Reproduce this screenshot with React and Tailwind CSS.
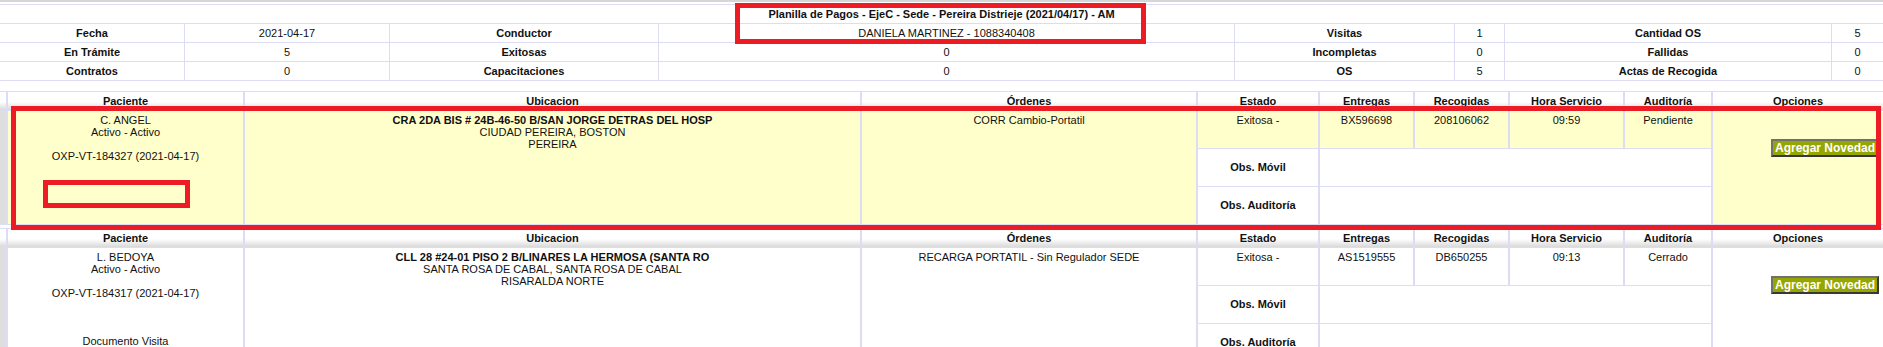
import React from "react";

const FONT = "font-['Liberation_Sans',Arial,sans-serif]";

function InfoTable() {
  const rows = [
    ["Fecha", "2021-04-17", "Conductor", "DANIELA MARTINEZ - 1088340408", "Visitas", "1", "Cantidad OS", "5"],
    ["En Trámite", "5", "Exitosas", "0", "Incompletas", "0", "Fallidas", "0"],
    ["Contratos", "0", "Capacitaciones", "0", "OS", "5", "Actas de Recogida", "0"],
  ];
  return (
    <div className="grid grid-cols-[184px_204px_268px_575px_219px_49px_326px_51px] gap-px bg-[#dcdcf5] py-px">
      <div className="col-span-8 flex h-[18px] items-center justify-center bg-white font-bold">
        Planilla de Pagos - EjeC - Sede - Pereira Distrieje (2021/04/17) - AM
      </div>
      {rows.map((r, i) =>
        r.map((c, j) => (
          <div
            key={`${i}-${j}`}
            className={`flex h-[18px] items-center justify-center bg-white ${j % 2 === 0 ? "font-bold" : ""}`}
          >
            {c}
          </div>
        ))
      )}
    </div>
  );
}

const HEAD = "bg-[linear-gradient(to_bottom,#ffffff_0%,#ffffff_55%,#d9d9d9_100%)]";

function Record({ yellow, name, code, addr, city, region, orden, entrega, recogida, hora, auditoria, doc }) {
  const bg = yellow ? "bg-[#ffffcc]" : "bg-white";
  const heads = ["Paciente", "Ubicacion", "Órdenes", "Estado", "Entregas", "Recogidas", "Hora Servicio", "Auditoría", "Opciones"];
  return (
    <div className="grid grid-cols-[6px_235px_615px_334px_120px_93px_93px_113px_86px_170px] grid-rows-[18px_37px_37px_37px] gap-x-[2px] gap-y-px bg-[#dcdcf5] py-px">
      <div className={HEAD} />
      {heads.map((h) => (
        <div key={h} className={`${HEAD} flex items-center justify-center font-bold`}>
          {h}
        </div>
      ))}
      <div className="row-span-3 bg-[#dedede]" />
      <div className={`row-span-3 ${bg} pt-[3px] text-center leading-[12px]`}>
        <div>{name}</div>
        <div>Activo - Activo</div>
        <div className="h-[12px]" />
        <div>{code}</div>
        {doc ? (
          <>
            <div className="h-[36px]" />
            <div>Documento Visita</div>
          </>
        ) : null}
      </div>
      <div className={`row-span-3 ${bg} pt-[3px] text-center leading-[12px]`}>
        <div className="font-bold">{addr}</div>
        <div>{city}</div>
        <div>{region}</div>
      </div>
      <div className={`row-span-3 ${bg} pt-[3px] text-center leading-[12px]`}>{orden}</div>
      <div className={`${bg} pt-[3px] text-center leading-[12px]`}>Exitosa -</div>
      <div className={`${bg} pt-[3px] text-center leading-[12px]`}>{entrega}</div>
      <div className={`${bg} pt-[3px] text-center leading-[12px]`}>{recogida}</div>
      <div className={`${bg} pt-[3px] text-center leading-[12px]`}>{hora}</div>
      <div className={`${bg} pt-[3px] text-center leading-[12px]`}>{auditoria}</div>
      <div className={`row-span-3 ${bg} flex items-start justify-end pr-[4px] pt-[28px]`}>
        <button className="h-[18px] border-2 border-b-[#383838] border-l-[#707070] border-r-[#383838] border-t-[#707070] bg-[#96a600] px-[2px] text-[12px] font-bold leading-[14px] text-white">
          Agregar Novedad
        </button>
      </div>
      <div className="flex items-center justify-center bg-white font-bold">Obs. Móvil</div>
      <div className="col-span-4 bg-white" />
      <div className="flex items-center justify-center bg-white font-bold">Obs. Auditoría</div>
      <div className="col-span-4 bg-white" />
    </div>
  );
}

export default function App() {
  return (
    <div className={`relative h-[347px] w-[1883px] overflow-hidden bg-white ${FONT} text-[11px] text-[#111]`}>
      <div className="h-[2px] bg-[#d6d6d6]" />
      <div className="mt-[2px]">
        <InfoTable />
      </div>
      <div className="mt-[10px]">
        <Record
          yellow
          name="C. ANGEL"
          code="OXP-VT-184327 (2021-04-17)"
          addr="CRA 2DA BIS # 24B-46-50 B/SAN JORGE DETRAS DEL HOSP"
          city="CIUDAD PEREIRA, BOSTON"
          region="PEREIRA"
          orden="CORR Cambio-Portatil"
          entrega="BX596698"
          recogida="208106062"
          hora="09:59"
          auditoria="Pendiente"
        />
      </div>
      <div className="mt-[3px]">
        <Record
          name="L. BEDOYA"
          code="OXP-VT-184317 (2021-04-17)"
          addr="CLL 28 #24-01 PISO 2 B/LINARES LA HERMOSA (SANTA RO"
          city="SANTA ROSA DE CABAL, SANTA ROSA DE CABAL"
          region="RISARALDA NORTE"
          orden="RECARGA PORTATIL - Sin Regulador SEDE"
          entrega="AS1519555"
          recogida="DB650255"
          hora="09:13"
          auditoria="Cerrado"
          doc
        />
      </div>

      {/* annotation overlays */}
      <div className="pointer-events-none absolute left-[735px] top-[3px] h-[41px] w-[411px] border-[5px] border-[#ed1c24]" />
      <div className="pointer-events-none absolute left-[11px] top-[106px] h-[124px] w-[1870px] border-[5px] border-[#ed1c24]" />
      <div className="pointer-events-none absolute left-[43px] top-[180px] h-[28px] w-[147px] border-[5px] border-[#ed1c24]" />
    </div>
  );
}
